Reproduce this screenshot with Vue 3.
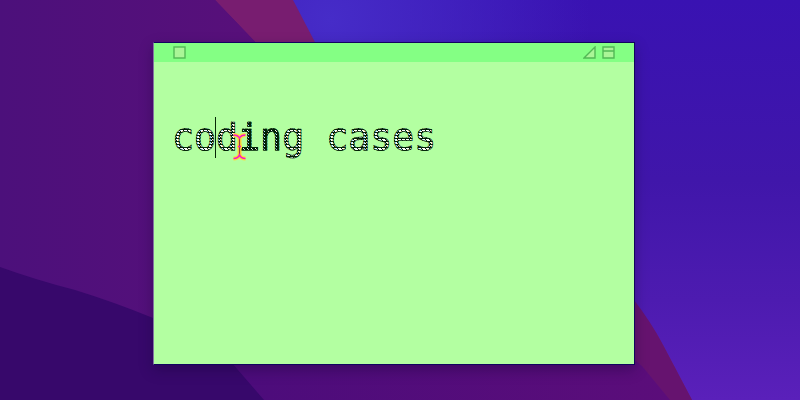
<script setup>
const runs = [
  { text: 'cod', dark: false },
  { text: 'in', dark: true },
  { text: 'g cases', dark: false }
]
</script>

<template>
  <main class="desktop">
    <svg class="wallpaper" viewBox="0 0 800 400" aria-hidden="true">
      <defs>
        <linearGradient id="blue" x1="0" y1="0" x2="0" y2="1">
          <stop offset="0" stop-color="#3912b2" />
          <stop offset=".45" stop-color="#4016aa" />
          <stop offset=".75" stop-color="#4d1bb0" />
          <stop offset="1" stop-color="#5a20ba" />
        </linearGradient>
        <radialGradient id="glow" gradientUnits="userSpaceOnUse" cx="330" cy="20" r="260">
          <stop offset="0" stop-color="#462cc8" />
          <stop offset="1" stop-color="#462cc8" stop-opacity="0" />
        </radialGradient>
        <linearGradient id="violet" x1="0" y1="0" x2="1" y2="0">
          <stop offset="0" stop-color="#4c107b" />
          <stop offset="1" stop-color="#58107a" />
        </linearGradient>
        <linearGradient id="floor" gradientUnits="userSpaceOnUse" x1="240" y1="0" x2="670" y2="0">
          <stop offset="0" stop-color="#4c0c7b" />
          <stop offset="1" stop-color="#5b0d7a" />
        </linearGradient>
      </defs>
      <rect width="800" height="400" fill="url(#blue)" />
      <rect width="800" height="400" fill="url(#glow)" />
      <path d="M200 0H293L318 48L634 303Q651 322 663 345L692 400H200Z" fill="#781d70" />
      <path d="M600 300H634Q651 322 663 345L692 400H600Z" fill="#66136f" />
      <path d="M0 0H215L260 47L642 366L670 400H0Z" fill="url(#floor)" />
      <path d="M0 0H215L260 47V350H0Z" fill="url(#violet)" />
      <path d="M0 267Q36 280 75 290Q114 302 153 318Q215 339 238 370L264 400H0Z" fill="#37086b" />
    </svg>

    <section class="note">
      <header class="bar">
        <svg class="icon" viewBox="0 0 13 13">
          <rect x="1" y="1" width="11" height="11" />
        </svg>
        <div class="controls">
          <svg class="icon" viewBox="0 0 13 13">
            <path d="M1 12L12 1V12Z" />
          </svg>
          <svg class="icon" viewBox="0 0 13 13">
            <path d="M1 1H12V12H1ZM1 5H12" />
          </svg>
        </div>
      </header>
      <div class="body">
        <div class="writing"><span v-for="run in runs" :key="run.text" class="ink" :class="{ dark: run.dark }">{{ run.text }}</span></div>
        <i class="caret"></i>
        <svg class="pointer" viewBox="0 0 17 30">
          <path class="halo" d="M2.5 3Q7 3 8.5 6Q10 3 14.5 3M8.5 6V23M2.5 26.5Q7 26.5 8.5 23Q10 26.5 14.5 26.5M6 14.5H11" />
          <path class="stem" d="M8.5 6V24" />
          <path class="beam" d="M2.5 3Q7 3 8.5 6Q10 3 14.5 3M2.5 26.5Q7 26.5 8.5 23Q10 26.5 14.5 26.5M7 14.5H10" />
        </svg>
      </div>
    </section>
  </main>
</template>

<style>
body {
  margin: 0;
}
</style>

<style scoped>
.desktop {
  position: relative;
  box-sizing: border-box;
  width: 800px;
  height: 400px;
  padding: 42px 0 0 153px;
  overflow: hidden;
  background: #4c107b;
}
.wallpaper {
  position: absolute;
  inset: 0;
  width: 800px;
  height: 400px;
}
.note {
  position: relative;
  box-sizing: border-box;
  width: 482px;
  height: 323px;
  border: 1px solid #12045f;
  border-left-color: #8377a0;
  background: #b3ffa1;
  box-shadow: 0 5px 12px rgba(20, 0, 55, 0.35);
}
.bar {
  display: flex;
  box-sizing: border-box;
  height: 19px;
  padding: 3px 19px;
  justify-content: space-between;
  align-items: flex-start;
  background: #84ff84;
}
.controls {
  display: flex;
  gap: 6px;
}
.icon {
  display: block;
  width: 13px;
  height: 13px;
  fill: #aaf597;
  stroke: #52b955;
  stroke-width: 1.4;
}
.body {
  position: relative;
  padding: 51px 0 0 18px;
}
.writing {
  width: 440px;
  font: 36.6px/50px "DejaVu Sans Mono", monospace;
  white-space: pre;
}
.ink {
  color: transparent;
  background: repeating-conic-gradient(#fff 0 25%, #001f05 0 42%, #fff 0 50%) 0 0 / 4px 3px;
  -webkit-background-clip: text;
  background-clip: text;
  -webkit-text-stroke: 0.75px #001f05;
}
.ink.dark {
  background-image: repeating-conic-gradient(#fff 0 8%, #001f05 0 50%);
}
.caret {
  position: absolute;
  left: 61px;
  top: 55px;
  width: 1px;
  height: 41px;
  background: #062806;
}
.pointer {
  position: absolute;
  left: 77px;
  top: 70px;
  width: 17px;
  height: 30px;
  fill: none;
}
.halo {
  stroke: #ffd83a;
  stroke-width: 4;
}
.beam {
  stroke: #f51ac8;
  stroke-width: 1.6;
}
.stem {
  stroke: #9b4040;
  stroke-width: 1.2;
}
</style>
